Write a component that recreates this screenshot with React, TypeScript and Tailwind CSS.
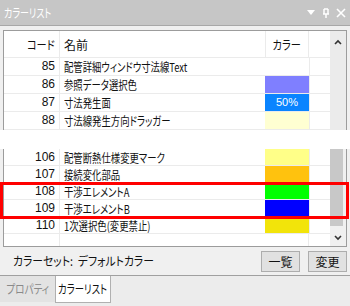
const topRows = [
  { code: '85', name: '配管詳細ウィンドウ寸法線Text', swatch: 'bg-white' },
  { code: '86', name: '参照データ選択色', swatch: 'bg-[#7f7fff]' },
  { code: '87', name: '寸法発生面', swatch: 'bg-[#0a84ff]', label: '50%' },
  { code: '88', name: '寸法線発生方向ドラッガー', swatch: 'bg-[#ffffd2]' },
];

const bottomRows = [
  { code: '106', name: '配管断熱仕様変更マーク', swatch: 'bg-[#ffff88]' },
  { code: '107', name: '接続変化部品', swatch: 'bg-[#ffc20e]' },
  { code: '108', name: '干渉エレメントA', swatch: 'bg-[#00ff00]' },
  { code: '109', name: '干渉エレメントB', swatch: 'bg-[#0000ff]' },
  { code: '110', name: '1次選択色(変更禁止)', swatch: 'bg-[#f2e40a]' },
];

const Row = ({ row, tall }: { row: any; tall?: boolean }) => (
  <div className={`flex ${tall ? 'h-[18px]' : 'h-[17px]'} border-b border-[#ebebeb]`}>
    <div className="w-[56px] pr-[4px] text-right border-r border-[#ebebeb] leading-[17px] font-['Liberation_Sans',sans-serif]">
      {row.code}
    </div>
    <div className="w-[205px] pl-[4px] leading-[17px] whitespace-nowrap overflow-hidden">
      <span className="inline-block origin-left scale-x-[0.78]">{row.name}</span>
    </div>
    <div className={`w-[44px] ${row.swatch} text-white text-[11px] text-center leading-[17px] font-['Liberation_Sans',sans-serif]`}>
      {row.label}
    </div>
    <div className="flex-1 border-l border-[#ebebeb]"></div>
  </div>
);

const App = () => {
  return (
    <div className="relative w-[350px] h-[306px] bg-[#f0f0f0] flex flex-col text-[12px] text-[#111] font-['Noto_Sans_CJK_JP',sans-serif] [font-feature-settings:'palt'] overflow-hidden">
      {/* title bar */}
      <div className="h-[25px] shrink-0 bg-[#c6c6c6] flex items-center justify-between pl-[4px] pr-[4px]">
        <span className="inline-block origin-left scale-x-[0.75] text-white text-[12px]">カラーリスト</span>
        <div className="flex items-center gap-[6px] text-white">
          <svg width="10" height="8" viewBox="0 0 10 8"><path d="M1 1h8L5 6z" fill="#fff" /></svg>
          <svg width="8" height="10" viewBox="0 0 8 10"><path d="M2 1v5M6 1v5M2 1h4M1 6h6M4 6v4" stroke="#fff" strokeWidth="1.5" fill="none" /></svg>
          <svg width="10" height="10" viewBox="0 0 10 10"><path d="M1 1l8 8M9 1l-8 8" stroke="#fff" strokeWidth="1.6" /></svg>
        </div>
      </div>
      <div className="h-[1px] shrink-0 bg-[#a8a8a8]"></div>
      <div className="h-[4px] shrink-0"></div>

      {/* list, upper part */}
      <div className="shrink-0 ml-[3px] mr-[3px] border-t border-l border-r border-[#9c9c9c] bg-white flex">
        <div className="flex-1">
          <div className="flex h-[27px] border-b border-[#ebebeb]">
            <div className="w-[56px] pr-[4px] text-right border-r border-[#ebebeb] leading-[27px]">
              <span className="inline-block origin-right scale-x-[0.85]">コード</span>
            </div>
            <div className="w-[205px] pl-[4px] leading-[27px]">名前</div>
            <div className="w-[44px] text-center leading-[27px] border-l border-r border-[#ebebeb]">
              <span className="inline-block scale-x-[0.85]">カラー</span>
            </div>
            <div className="flex-1"></div>
          </div>
          {topRows.map((r) => (
            <Row key={r.code} row={r} tall />
          ))}
        </div>
        <div className="w-[16px] bg-[#ebebeb] flex justify-center pt-[8px]">
          <svg width="8" height="6" viewBox="0 0 8 6"><path d="M1 5l3-3 3 3" stroke="#333" strokeWidth="1.6" fill="none" /></svg>
        </div>
      </div>

      {/* cut gap */}
      <div className="h-[19px] shrink-0 bg-white"></div>

      {/* list, lower part */}
      <div className="shrink-0 ml-[3px] mr-[3px] border-b border-l border-r border-[#9c9c9c] bg-white flex">
        <div className="flex-1">
          {bottomRows.map((r) => (
            <Row key={r.code} row={r} />
          ))}
          <div className="flex h-[12px]">
            <div className="w-[56px] border-r border-[#ebebeb]"></div>
            <div className="w-[205px]"></div>
            <div className="w-[44px] border-r border-[#ebebeb]"></div>
          </div>
        </div>
        <div className="w-[16px] bg-[#f0f0f0] flex flex-col">
          <div className="w-[13px] h-[77px] bg-[#c8c8c8]"></div>
          <div className="flex-1 flex items-end justify-center pb-[5px]">
            <svg width="8" height="6" viewBox="0 0 8 6"><path d="M1 1l3 3 3-3" stroke="#333" strokeWidth="1.6" fill="none" /></svg>
          </div>
        </div>
      </div>

      {/* footer */}
      <div className="h-[28px] shrink-0 flex items-center pl-[13px] pr-[3px]">
        <span className="flex-1 whitespace-nowrap">
          <span className="inline-block origin-left scale-x-[0.9]">カラーセット:&nbsp; デフォルトカラー</span>
        </span>
        <button className="w-[39px] h-[21px] border border-[#adadad] bg-[#e1e1e1] text-[12px] leading-[19px] mr-[8px]">一覧</button>
        <button className="w-[39px] h-[21px] border border-[#adadad] bg-[#e1e1e1] text-[12px] leading-[19px]">変更</button>
      </div>
      <div className="h-[1px] shrink-0 bg-[#a0a0a0]"></div>

      {/* tabs */}
      <div className="flex-1 flex bg-[#ececec]">
        <div className="w-[55px] h-[26px] flex items-center justify-center text-[#8a8a8a] bg-[#e3e3e3] whitespace-nowrap">
          <span className="inline-block scale-x-[0.8]">プロパティ</span>
        </div>
        <div className="w-[56px] h-[27px] flex items-center justify-center bg-white border-l border-r border-b border-[#b0b0b0] whitespace-nowrap">
          <span className="inline-block scale-x-[0.78]">カラーリスト</span>
        </div>
      </div>

      {/* highlight */}
      <div className="absolute left-0 top-[182px] w-[349px] h-[37px] border-[3px] border-[#ff0000]"></div>
    </div>
  );
};

export default App;
